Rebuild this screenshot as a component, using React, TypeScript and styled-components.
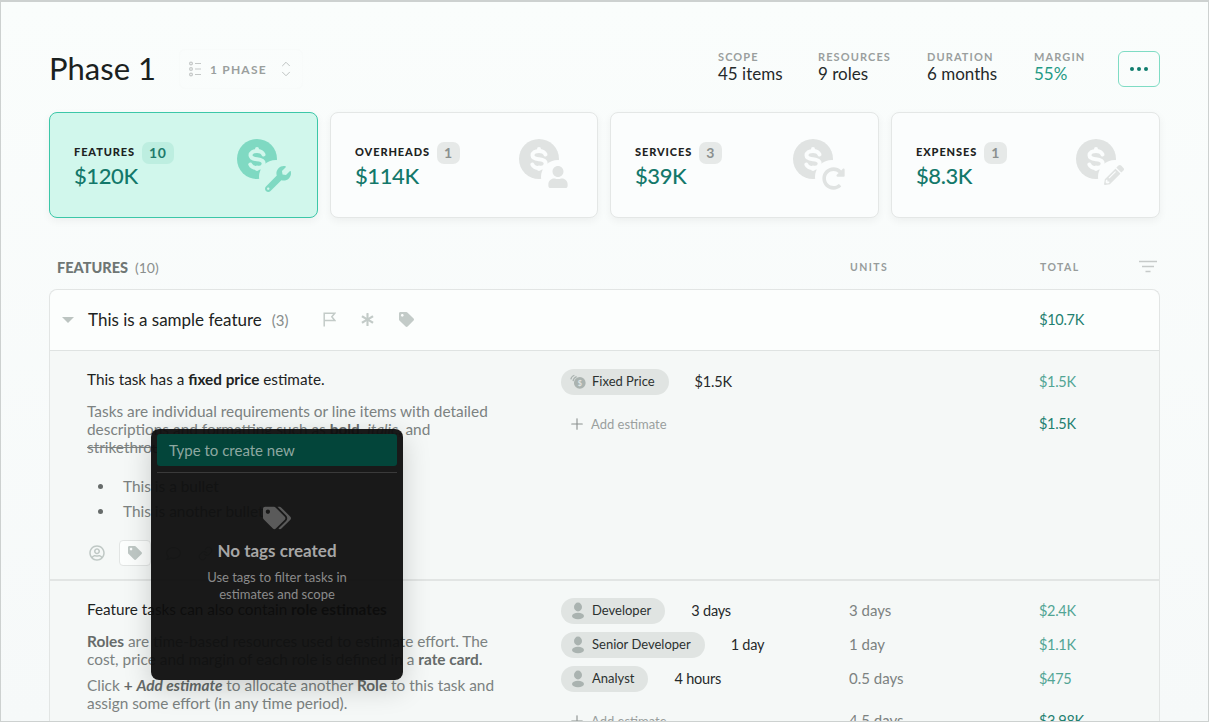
import { ReactNode } from "react";
import styled, { createGlobalStyle } from "styled-components";
import {
  FaAsterisk,
  FaPencilAlt,
  FaRedoAlt,
  FaTag,
  FaTags,
  FaUser,
  FaWrench,
  FaRegUserCircle,
  FaRegComment,
} from "react-icons/fa";
import { FiLink } from "react-icons/fi";
import { ChevronDown, ChevronUp, Plus } from "lucide-react";

const FONT = `Lato, "Noto Sans", sans-serif`;

const GlobalStyle = createGlobalStyle`
  html, body {
    margin: 0;
    padding: 0;
    overflow: hidden;
    background: #f9fcfb;
  }
  * {
    box-sizing: border-box;
  }
`;

type CoinProps = {
  id: string;
  active?: boolean;
  inset: number;
  children: ReactNode;
};

function CoinIcon({ id, active, inset, children }: CoinProps) {
  return (
    <CoinSvg
      $inset={inset}
      $active={active}
      viewBox="0 0 54 54"
      width="54"
      height="54"
    >
      <mask id={id}>
        <rect width="54" height="54" fill="#fff" />
        <circle cx="39" cy="38" r="17" fill="#000" />
        <g fill="none" stroke="#000" strokeWidth="4" strokeLinecap="round">
          <path d="M26.5 15.5c-1-2.4-3.4-3.6-6.5-3.6-3.8 0-6.5 1.8-6.5 4.4s2.8 3.6 6.5 4 6.7 1.5 6.7 4.2-3 4.5-6.7 4.5c-3.2 0-5.6-1.1-6.7-3.5" />
          <path d="M20 10v1.5M20 28.5v1.5" />
        </g>
      </mask>
      <circle cx="20" cy="20" r="20" mask={`url(#${id})`} />
      {children}
    </CoinSvg>
  );
}

function PhaseGlyph() {
  return (
    <svg width="12" height="16" viewBox="0 0 12 16" fill="none">
      <g stroke="#c4c8c7" strokeWidth="1.2">
        <circle cx="2" cy="2.5" r="1.4" />
        <circle cx="2" cy="8" r="1.4" />
        <circle cx="2" cy="13.5" r="1.4" />
        <path d="M6 2.5h6M6 8h6M6 13.5h6" />
      </g>
    </svg>
  );
}

function FilterGlyph() {
  return (
    <svg width="18" height="14" viewBox="0 0 18 14" fill="none">
      <path
        d="M0 1.5h18M3 6.5h12M6.5 11.5h5"
        stroke="#c6cac9"
        strokeWidth="1.6"
      />
    </svg>
  );
}

function FlagGlyph() {
  return (
    <svg width="13" height="15" viewBox="0 0 13 15" fill="none">
      <path
        d="M1.2 14.5V1.2h10.6L8.8 4.8l3 3.6H1.2"
        stroke="currentColor"
        strokeWidth="1.5"
      />
    </svg>
  );
}

function RoleGlyph() {
  return (
    <svg width="14" height="18" viewBox="0 0 14 18" fill="#aab3b0">
      <ellipse cx="7" cy="5" rx="4" ry="4.4" />
      <ellipse cx="7" cy="14" rx="6" ry="3.2" />
    </svg>
  );
}

function FixedPriceGlyph() {
  return (
    <svg width="20" height="18" viewBox="0 0 20 18" fill="none">
      <path
        d="M2 6a6 6 0 0 1 4-4.5M4.5 8a6 6 0 0 1 4-5"
        stroke="#aab3b0"
        strokeWidth="1.4"
      />
      <circle cx="12" cy="10" r="6.5" fill="#aab3b0" />
      <text
        x="12"
        y="13"
        textAnchor="middle"
        fontSize="8"
        fontWeight="700"
        fill="#e0e4e2"
        fontFamily={FONT}
      >
        $
      </text>
    </svg>
  );
}

type EstimateProps = {
  icon: ReactNode;
  name: string;
  value: string;
  units?: string;
  total: string;
};

function EstimateRow({ icon, name, value, units, total }: EstimateProps) {
  return (
    <EstimateGrid>
      <EstimateMain>
        <Pill>
          <PillIcon>{icon}</PillIcon>
          <PillName>{name}</PillName>
        </Pill>
        <EstimateValue>{value}</EstimateValue>
      </EstimateMain>
      <UnitsCell>{units}</UnitsCell>
      <TotalCell>{total}</TotalCell>
    </EstimateGrid>
  );
}

function AddRow({ units, total }: { units?: string; total: string }) {
  return (
    <AddGrid>
      <AddEstimate>
        <Plus size={18} strokeWidth={1.5} color="#8b918f" />
        Add estimate
      </AddEstimate>
      <UnitsCell>{units}</UnitsCell>
      <TotalCell $strong>{total}</TotalCell>
    </AddGrid>
  );
}

export default function App() {
  return (
    <>
      <GlobalStyle />
      <Frame>
        <Header>
          <Title>Phase 1</Title>
          <PhaseSelect>
            <PhaseGlyph />
            <PhaseLabel>1 PHASE</PhaseLabel>
            <Chevrons>
              <ChevronUp size={14} strokeWidth={1.5} />
              <ChevronDown size={14} strokeWidth={1.5} />
            </Chevrons>
          </PhaseSelect>
          <Stats>
            <Stat>
              <StatLabel>SCOPE</StatLabel>
              <StatValue>45 items</StatValue>
            </Stat>
            <Stat>
              <StatLabel>RESOURCES</StatLabel>
              <StatValue>9 roles</StatValue>
            </Stat>
            <Stat>
              <StatLabel>DURATION</StatLabel>
              <StatValue>6 months</StatValue>
            </Stat>
            <Stat>
              <StatLabel>MARGIN</StatLabel>
              <StatValue $accent>55%</StatValue>
            </Stat>
          </Stats>
          <MoreButton>
            <Dot />
            <Dot />
            <Dot />
          </MoreButton>
        </Header>

        <Cards>
          <Card $active>
            <CardText>
              <CardHead>
                <CardLabel>FEATURES</CardLabel>
                <Badge $active>10</Badge>
              </CardHead>
              <CardValue>$120K</CardValue>
            </CardText>
            <CoinIcon id="coin-features" active inset={26}>
              <FaWrench x="28" y="27" size="26" />
            </CoinIcon>
          </Card>
          <Card>
            <CardText>
              <CardHead>
                <CardLabel>OVERHEADS</CardLabel>
                <Badge>1</Badge>
              </CardHead>
              <CardValue>$114K</CardValue>
            </CardText>
            <CoinIcon id="coin-overheads" inset={24}>
              <FaUser x="28" y="27" size="22" />
            </CoinIcon>
          </Card>
          <Card>
            <CardText>
              <CardHead>
                <CardLabel>SERVICES</CardLabel>
                <Badge>3</Badge>
              </CardHead>
              <CardValue>$39K</CardValue>
            </CardText>
            <CoinIcon id="coin-services" inset={31}>
              <FaRedoAlt x="29" y="28" size="23" />
            </CoinIcon>
          </Card>
          <Card>
            <CardText>
              <CardHead>
                <CardLabel>EXPENSES</CardLabel>
                <Badge>1</Badge>
              </CardHead>
              <CardValue>$8.3K</CardValue>
            </CardText>
            <CoinIcon id="coin-expenses" inset={29}>
              <FaPencilAlt x="28" y="26" size="20" />
            </CoinIcon>
          </Card>
        </Cards>

        <SectionHeader>
          <SectionTitle>
            <strong>FEATURES</strong>
            <SectionCount>(10)</SectionCount>
          </SectionTitle>
          <ColumnLabel>UNITS</ColumnLabel>
          <ColumnLabel>TOTAL</ColumnLabel>
          <FilterGlyph />
        </SectionHeader>

        <Table>
          <FeatureRow>
            <Caret />
            <FeatureName>This is a sample feature</FeatureName>
            <FeatureCount>(3)</FeatureCount>
            <FeatureIcons>
              <FlagGlyph />
              <FaAsterisk size={13} />
              <FaTag size={15} />
            </FeatureIcons>
            <FeatureTotal>$10.7K</FeatureTotal>
          </FeatureRow>

          <Task>
            <TaskBody>
              <TaskTitle>
                This task has a <strong>fixed price</strong> estimate.
              </TaskTitle>
              <TaskNote>
                Tasks are individual requirements or line items with detailed
                descriptions and formatting such as <strong>bold</strong>,{" "}
                <em>italic</em>, and <s>strikethrough</s>
              </TaskNote>
              <Bullets>
                <li>This is a bullet</li>
                <li>This is another bullet</li>
              </Bullets>
              <TaskActions>
                <ActionSlot>
                  <FaRegUserCircle size={16} />
                </ActionSlot>
                <ActionButton>
                  <FaTag size={14} />
                </ActionButton>
                <ActionSlot>
                  <FaRegComment size={15} />
                </ActionSlot>
                <ActionSlot>
                  <FiLink size={15} />
                </ActionSlot>
              </TaskActions>
            </TaskBody>
            <Estimates $top={18}>
              <EstimateRow
                icon={<FixedPriceGlyph />}
                name="Fixed Price"
                value="$1.5K"
                total="$1.5K"
              />
              <AddRow total="$1.5K" />
            </Estimates>
          </Task>

          <Task>
            <TaskBody>
              <TaskTitle>
                Feature tasks can also contain <strong>role estimates</strong>
              </TaskTitle>
              <TaskNote>
                <strong>Roles</strong> are time-based resources used to estimate
                effort. The cost, price and margin of each role is defined in a{" "}
                <strong>rate card.</strong>
              </TaskNote>
              <TaskNoteTight>
                Click{" "}
                <strong>
                  + <em>Add estimate</em>
                </strong>{" "}
                to allocate another <strong>Role</strong> to this task and
                assign some effort (in any time period).
              </TaskNoteTight>
            </TaskBody>
            <Estimates $top={17}>
              <EstimateRow
                icon={<RoleGlyph />}
                name="Developer"
                value="3 days"
                units="3 days"
                total="$2.4K"
              />
              <EstimateRow
                icon={<RoleGlyph />}
                name="Senior Developer"
                value="1 day"
                units="1 day"
                total="$1.1K"
              />
              <EstimateRow
                icon={<RoleGlyph />}
                name="Analyst"
                value="4 hours"
                units="0.5 days"
                total="$475"
              />
              <AddRow units="4.5 days" total="$3.98K" />
            </Estimates>
          </Task>
        </Table>

        <TagPopover>
          <TagInput>Type to create new</TagInput>
          <PopoverRule />
          <EmptyState>
            <FaTags size={28} />
            <EmptyTitle>No tags created</EmptyTitle>
            <EmptyText>
              Use tags to filter tasks in
              <br />
              estimates and scope
            </EmptyText>
          </EmptyState>
        </TagPopover>
      </Frame>
    </>
  );
}

const Frame = styled.div`
  position: relative;
  width: 1209px;
  height: 722px;
  overflow: hidden;
  padding: 48px 48px 0;
  border: 1px solid #cdd1d0;
  border-top-width: 2px;
  background: linear-gradient(#fafdfc, #f6f9f9);
  font-family: ${FONT};
  color: #1d2322;
`;

const Header = styled.div`
  display: flex;
  align-items: center;
  height: 38px;
`;

const Title = styled.h1`
  margin: -2px 0 0;
  width: 130px;
  font-size: 31px;
  font-weight: 400;
  color: #1a2120;
`;

const PhaseSelect = styled.div`
  display: flex;
  align-items: center;
  gap: 9px;
  width: 124px;
  height: 40px;
  padding: 0 9px;
  border: 1px solid #f8fbfa;
  border-radius: 6px;
`;

const PhaseLabel = styled.span`
  width: 60px;
  font-size: 12px;
  font-weight: 700;
  letter-spacing: 1.2px;
  color: #9a9f9e;
`;

const Chevrons = styled.span`
  display: flex;
  flex-direction: column;
  color: #b5bab9;

  svg {
    margin: -2px 0;
  }
`;

const Stats = styled.div`
  display: grid;
  grid-template-columns: 100px 109px 107px 84px;
  margin-top: -5px;
  margin-left: auto;
`;

const Stat = styled.div`
  display: flex;
  flex-direction: column;
`;

const StatLabel = styled.span`
  font-size: 11px;
  line-height: 14px;
  font-weight: 700;
  letter-spacing: 1.1px;
  color: #9a9f9e;
`;

const StatValue = styled.span<{ $accent?: boolean }>`
  font-size: 17px;
  line-height: 19px;
  color: ${(props) => (props.$accent ? "#1f9a85" : "#25292a")};
`;

const MoreButton = styled.div`
  display: flex;
  align-items: center;
  justify-content: center;
  gap: 3px;
  width: 42px;
  height: 36px;
  border: 1px solid #7fdcc4;
  border-radius: 6px;
`;

const Dot = styled.span`
  width: 4px;
  height: 4px;
  border-radius: 50%;
  background: #0f7d6d;
`;

const Cards = styled.div`
  display: grid;
  grid-template-columns: 269px 268px 269px 269px;
  gap: 12px;
  margin-top: 24px;
`;

const Card = styled.div<{ $active?: boolean }>`
  display: flex;
  align-items: center;
  justify-content: space-between;
  height: 106px;
  padding-left: 24px;
  border: 1px solid ${(props) => (props.$active ? "#3cc7a8" : "#e4e7e6")};
  border-radius: 8px;
  background: ${(props) => (props.$active ? "#d1f7ec" : "#fbfdfd")};
  box-shadow: 0 3px 8px rgb(0 0 0 / 5%);
`;

const CardText = styled.div`
  display: flex;
  flex-direction: column;
`;

const CardHead = styled.div`
  display: flex;
  align-items: center;
  gap: 7px;
`;

const CardLabel = styled.span`
  margin-top: -2px;
  font-size: 11px;
  font-weight: 900;
  letter-spacing: 0.9px;
  color: #1d2322;
`;

const Badge = styled.span<{ $active?: boolean }>`
  display: flex;
  align-items: center;
  justify-content: center;
  min-width: 22px;
  height: 22px;
  padding: 0 7px;
  border-radius: 7px;
  font-size: 14px;
  font-weight: 700;
  letter-spacing: 0.6px;
  background: ${(props) => (props.$active ? "#bdeee0" : "#e6e9e8")};
  color: ${(props) => (props.$active ? "#1e7a6c" : "#8b908f")};
`;

const CardValue = styled.span`
  margin-top: -1px;
  font-size: 22px;
  line-height: 26px;
  font-weight: 500;
  letter-spacing: -0.4px;
  color: #13786a;
`;

const CoinSvg = styled.svg<{ $inset: number; $active?: boolean }>`
  flex: none;
  margin-top: 2px;
  margin-right: ${(props) => props.$inset}px;
  fill: ${(props) => (props.$active ? "#7fd9c2" : "#e0e3e2")};
  color: ${(props) => (props.$active ? "#7fd9c2" : "#e0e3e2")};
`;

const SectionHeader = styled.div`
  display: grid;
  grid-template-columns: 793px 190px 99px 18px;
  align-items: center;
  height: 18px;
  margin-top: 40px;
  padding-left: 8px;
`;

const SectionTitle = styled.span`
  font-size: 15px;
  color: #8a8f8e;

  strong {
    font-weight: 900;
    font-size: 14.5px;
    color: #6f7674;
  }
`;

const SectionCount = styled.span`
  margin-left: 7px;
  font-size: 14px;
`;

const ColumnLabel = styled.span`
  font-size: 10.5px;
  font-weight: 700;
  letter-spacing: 1.4px;
  color: #979c9b;
`;

const Table = styled.div`
  margin-top: 13px;
  border: 1px solid #e2e5e4;
  border-bottom: 0;
  border-radius: 8px 8px 0 0;
  background: #f5f8f7;
`;

const FeatureRow = styled.div`
  display: flex;
  align-items: center;
  height: 61px;
  padding-bottom: 1px;
  border-bottom: 1px solid #dfe3e2;
  border-radius: 8px 8px 0 0;
  background: #fcfefd;
`;

const Caret = styled.span`
  width: 0;
  height: 0;
  margin: 1px 14px 0 12px;
  border-left: 6px solid transparent;
  border-right: 6px solid transparent;
  border-top: 6px solid #bcc4c1;
`;

const FeatureName = styled.span`
  font-size: 17px;
  color: #1d2322;
`;

const FeatureCount = styled.span`
  margin-left: 10px;
  font-size: 15px;
  color: #878c8b;
`;

const FeatureIcons = styled.span`
  display: flex;
  align-items: center;
  gap: 25px;
  margin-left: 34px;
  color: #c3cbc8;
`;

const FeatureTotal = styled.span`
  margin-left: auto;
  margin-right: 75px;
  font-size: 14.5px;
  letter-spacing: -0.3px;
  color: #1f8070;
`;

const Task = styled.div`
  display: grid;
  grid-template-columns: 511px 1fr;
  border-bottom: 2px solid #e2e5e4;
`;

const TaskBody = styled.div`
  padding: 19px 60px 13px 37px;
`;

const TaskTitle = styled.p`
  margin: 0;
  font-size: 15.3px;
  line-height: 18px;
  color: #1d2322;
`;

const TaskNote = styled.p`
  margin: 14px 0 0;
  font-size: 15.4px;
  line-height: 18px;
  color: #7c8281;

  strong {
    color: #666b6a;
  }
`;

const TaskNoteTight = styled(TaskNote)`
  margin-top: 8px;
`;

const Bullets = styled.ul`
  margin: 21px 0 0;
  padding-left: 11px;
  list-style: none;
  font-size: 15.4px;
  line-height: 18px;
  color: #7c8281;

  li {
    display: flex;
    align-items: center;
    gap: 20px;
  }

  li::before {
    content: "";
    width: 5px;
    height: 5px;
    border-radius: 50%;
    background: #666b6a;
  }

  li + li {
    margin-top: 7px;
  }
`;

const TaskActions = styled.div`
  display: flex;
  align-items: center;
  gap: 12px;
  height: 26px;
  margin-top: 20px;
  color: #bfc8c5;
`;

const ActionSlot = styled.span`
  display: flex;
  align-items: center;
  justify-content: center;
  width: 20px;
  height: 26px;
`;

const ActionButton = styled.span`
  display: flex;
  align-items: center;
  justify-content: center;
  width: 32px;
  height: 26px;
  border: 1px solid #e2e5e4;
  border-radius: 4px;
  background: #fcfefd;
`;

const Estimates = styled.div<{ $top: number }>`
  display: flex;
  flex-direction: column;
  gap: 8px;
  padding-top: ${(props) => props.$top}px;
`;

const EstimateGrid = styled.div`
  display: grid;
  grid-template-columns: 288px 190px 1fr;
  align-items: center;
  min-height: 26px;
`;

const AddGrid = styled(EstimateGrid)`
  margin-top: 8px;
`;

const EstimateMain = styled.div`
  display: flex;
  align-items: center;
`;

const Pill = styled.span`
  display: flex;
  align-items: center;
  gap: 5px;
  height: 26px;
  padding: 0 14px 0 8px;
  border-radius: 13px;
  background: #e0e4e2;
`;

const PillIcon = styled.span`
  display: flex;
  justify-content: center;
  width: 18px;
`;

const PillName = styled.span`
  padding-bottom: 2px;
  font-size: 13px;
  color: #2c3130;
`;

const EstimateValue = styled.span`
  margin-left: 26px;
  padding-bottom: 2px;
  font-size: 14.5px;
  letter-spacing: -0.2px;
  color: #25292a;
`;

const UnitsCell = styled.span`
  padding-bottom: 2px;
  font-size: 15px;
  color: #7c8281;
`;

const TotalCell = styled.span<{ $strong?: boolean }>`
  padding-bottom: 2px;
  font-size: 14.5px;
  letter-spacing: -0.3px;
  color: ${(props) => (props.$strong ? "#1f8070" : "#52a595")};
`;

const AddEstimate = styled.span`
  display: flex;
  align-items: center;
  gap: 5px;
  padding-left: 7px;
  font-size: 13px;
  color: #9a9f9e;
`;

const TagPopover = styled.div`
  position: absolute;
  left: 150px;
  top: 427px;
  width: 252px;
  height: 251px;
  padding: 5px 6px;
  border-radius: 8px;
  background: rgb(13 13 13 / 95%);
  box-shadow: 0 8px 28px rgb(0 0 0 / 18%);
`;

const TagInput = styled.div`
  height: 32px;
  padding: 0 12px;
  border-radius: 3px;
  background: #03453a;
  font-size: 15px;
  line-height: 32px;
  color: #8ea8a1;
`;

const PopoverRule = styled.div`
  height: 1px;
  margin-top: 6px;
  background: #3a3a3a;
`;

const EmptyState = styled.div`
  display: flex;
  flex-direction: column;
  align-items: center;
  margin-top: 31px;
  color: #5a5a5a;
  text-align: center;
`;

const EmptyTitle = styled.div`
  margin-top: 8px;
  font-size: 17px;
  line-height: 22px;
  font-weight: 700;
  color: #a6a6a6;
`;

const EmptyText = styled.div`
  margin-top: 7px;
  font-size: 13px;
  line-height: 17px;
  color: #8b8b8b;
`;
